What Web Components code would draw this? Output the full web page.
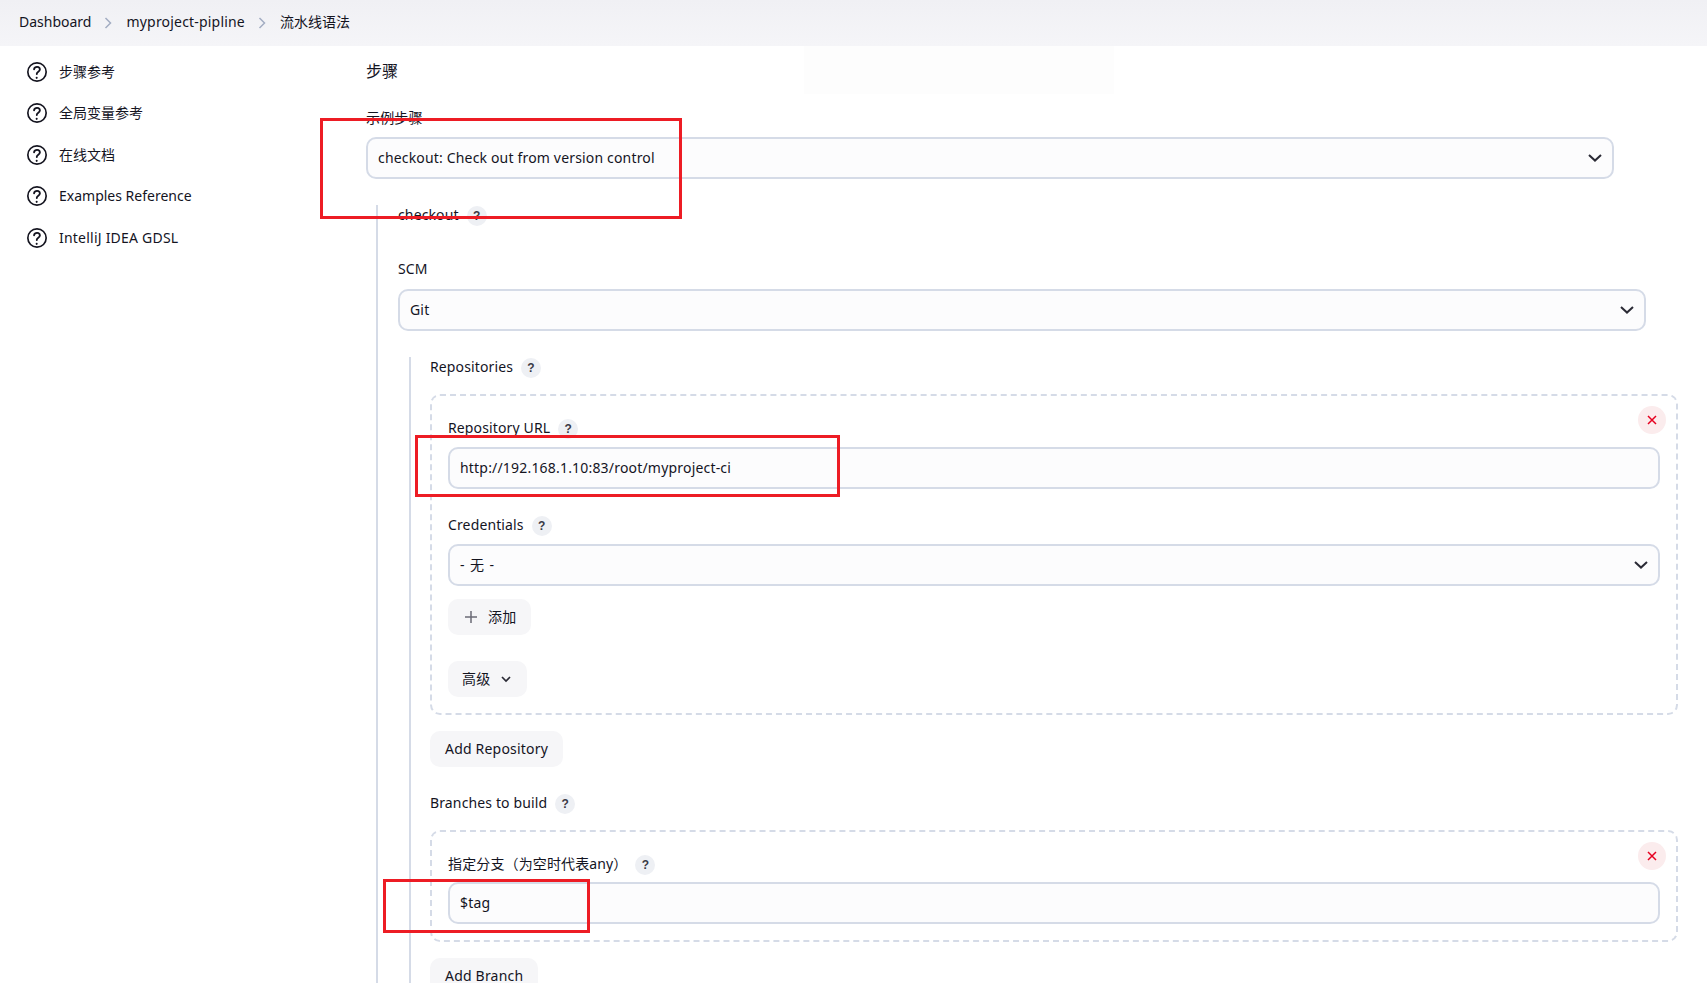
<!DOCTYPE html>
<html lang="zh">
<head>
<meta charset="utf-8">
<title>流水线语法</title>
<style>
    html, body {
        margin: 0;
        height: 100%;
        overflow: hidden;
        background: #fff;
    }
    body {
        position: relative;
        font: 14px/20px "Noto Sans", "Noto Sans CJK SC", sans-serif;
        color: #14141f;
    }
</style>
</head>
<body>
<jk-breadcrumbs>
    <jk-crumb>Dashboard</jk-crumb>
    <jk-crumb style="letter-spacing:.19px">myproject-pipline</jk-crumb>
    <jk-crumb last>流水线语法</jk-crumb>
</jk-breadcrumbs>
<jk-page>
    <jk-side-link slot="side">步骤参考</jk-side-link>
    <jk-side-link slot="side">全局变量参考</jk-side-link>
    <jk-side-link slot="side">在线文档</jk-side-link>
    <jk-side-link slot="side">Examples Reference</jk-side-link>
    <jk-side-link slot="side" style="letter-spacing:.22px">IntelliJ IDEA GDSL</jk-side-link>

    <jk-title>步骤</jk-title>
    <jk-label style="margin-top:27px;margin-bottom:9px">示例步骤</jk-label>
    <jk-select style="margin-right:64px">checkout: Check out from version control</jk-select>

    <jk-indent style="margin-top:26px;margin-left:10px;padding-left:20px">
        <jk-label help style="margin-bottom:0">checkout</jk-label>
        <jk-label style="margin-top:34px">SCM</jk-label>
        <jk-select style="margin-right:32px">Git</jk-select>

        <jk-indent style="margin-top:26px;margin-left:11px;padding-left:19px">
            <jk-label help style="margin-bottom:17px">Repositories</jk-label>
            <jk-chunk style="padding-top:22px">
                <jk-label help style="margin-bottom:9px">Repository URL</jk-label>
                <jk-text-field>http://192.168.1.10:83/root/myproject-ci</jk-text-field>
                <jk-label help style="margin-top:26px;margin-bottom:9px">Credentials</jk-label>
                <jk-select style="word-spacing:1.5px">- 无 -</jk-select>
                <jk-button icon="plus" style="margin-top:13px">添加</jk-button>
                <jk-button icon="chevron" style="margin-top:26px">高级</jk-button>
            </jk-chunk>
            <jk-button style="margin-top:16px">Add Repository</jk-button>
            <jk-label help style="margin-top:26px;margin-bottom:17px">Branches to build</jk-label>
            <jk-chunk style="padding-top:22px">
                <jk-label help style="margin-bottom:8px">指定分支（为空时代表any）</jk-label>
                <jk-text-field>$tag</jk-text-field>
            </jk-chunk>
            <jk-button style="margin-top:16px">Add Branch</jk-button>
        </jk-indent>
    </jk-indent>
</jk-page>
<jk-ghost-toast></jk-ghost-toast>
<jk-red-mark style="left:320px;top:118px;width:362px;height:101px"></jk-red-mark>
<jk-red-mark style="left:415px;top:435px;width:425px;height:62px"></jk-red-mark>
<jk-red-mark style="left:383px;top:879px;width:207px;height:54px"></jk-red-mark>

<script>
const CHEVRON_DOWN = `<svg viewBox="0 0 14 8" width="14" height="8" fill="none" stroke="currentColor" stroke-width="2"><path d="M1 1l6 5.6L13 1"/></svg>`;

const defineSimple = (name, html) => {
    customElements.define(name, class extends HTMLElement {
        constructor() {
            super();
            let shadowRoot = this.attachShadow({ mode: "open" });
            shadowRoot.innerHTML = html;
        }
    });
};

defineSimple("jk-breadcrumbs", `<style>
    :host {
        display: flex;
        align-items: center;
        box-sizing: border-box;
        height: 46px;
        padding: 0 0 2px 19px;
        background: linear-gradient(#f0f0f4, #f5f5f8);
    }
</style><slot></slot>`);

customElements.define("jk-crumb", class extends HTMLElement {
    constructor() {
        super();
        let shadowRoot = this.attachShadow({ mode: "open" });
        let separator = this.hasAttribute("last") ? "" : `<svg viewBox="0 0 8 12" width="8" height="12" fill="none" stroke="#a3adc2" stroke-width="1.5"><path d="M1.5 1l5 5-5 5"/></svg>`;
        shadowRoot.innerHTML = `<style>
        :host {
            display: flex;
            align-items: center;
        }
        svg {
            margin: 1px 14px 0 13px;
        }
        </style><slot></slot>${separator}`;
    }
});

defineSimple("jk-page", `<style>
    :host {
        display: grid;
        grid-template-columns: 366px 1fr;
    }
    aside {
        display: flex;
        flex-direction: column;
        padding-top: 5px;
    }
    main {
        display: flex;
        flex-direction: column;
        min-width: 0;
        padding: 15px 29px 0 0;
    }
</style><aside><slot name="side"></slot></aside><main><slot></slot></main>`);

defineSimple("jk-side-link", `<style>
    :host {
        display: flex;
        align-items: center;
        gap: 12px;
        height: 41.5px;
        padding-left: 27px;
    }
    svg {
        width: 20px;
        height: 20px;
        flex: none;
    }
</style><svg viewBox="64 64 384 384" fill="none" stroke="#14141f"><path d="M256 80a176 176 0 10176 176A176 176 0 00256 80z" stroke-width="32"/><path d="M200 202.29s.84-17.5 19.57-32.57C230.68 160.77 244 158.18 256 158c10.93-.14 20.69 1.67 26.53 4.45 10 4.76 29.47 16.38 29.47 41.09 0 26-17 37.81-36.37 50.8S252 281.43 252 296" stroke-linecap="round" stroke-width="36"/><path d="M250 348a20 20 0 1020 20 20 20 0 00-20-20z" fill="#14141f" stroke="none"/></svg><slot></slot>`);

defineSimple("jk-title", `<style>
    :host {
        display: block;
        font-size: 16px;
        height: 20px;
    }
</style><slot></slot>`);

customElements.define("jk-label", class extends HTMLElement {
    constructor() {
        super();
        let shadowRoot = this.attachShadow({ mode: "open" });
        let help = this.hasAttribute("help") ? `<jk-help></jk-help>` : "";
        shadowRoot.innerHTML = `<style>
        :host {
            display: flex;
            align-items: center;
            gap: 8px;
            height: 20px;
            margin-bottom: 10px;
            letter-spacing: .13px;
        }
        </style><span><slot></slot></span>${help}`;
    }
});

defineSimple("jk-help", `<style>
    :host {
        display: flex;
        align-items: center;
        justify-content: center;
        width: 20px;
        height: 20px;
        margin-top: 1px;
        border-radius: 50%;
        background: #eef0f4;
        color: #3a3a46;
        font: 700 12px/20px "Liberation Sans", sans-serif;
    }
</style>?`);

defineSimple("jk-select", `<style>
    :host {
        display: flex;
        align-items: center;
        justify-content: space-between;
        box-sizing: border-box;
        height: 42px;
        padding: 0 10px;
        border: 2px solid #d5dbe7;
        border-radius: 10px;
        background: #fcfcfd;
        letter-spacing: .17px;
    }
    svg {
        flex: none;
        color: #2a2a35;
    }
</style><slot></slot>${CHEVRON_DOWN}`);

defineSimple("jk-text-field", `<style>
    :host {
        display: flex;
        align-items: center;
        box-sizing: border-box;
        height: 42px;
        padding: 0 10px;
        border: 2px solid #d5dbe7;
        border-radius: 10px;
        background: #fcfcfd;
        letter-spacing: .19px;
    }
</style><slot></slot>`);

defineSimple("jk-indent", `<style>
    :host {
        display: flex;
        flex-direction: column;
        border-left: 2px solid #d5dbe7;
    }
</style><slot></slot>`);

defineSimple("jk-chunk", `<style>
    :host {
        display: flex;
        flex-direction: column;
        position: relative;
        padding: 24px 16px 16px 16px;
        border: 2px dashed #d5dbe7;
        border-radius: 10px;
    }
    button {
        position: absolute;
        top: 10px;
        right: 10px;
        display: flex;
        align-items: center;
        justify-content: center;
        width: 28px;
        height: 28px;
        padding: 0;
        border: 0;
        border-radius: 50%;
        background: #fbeced;
        color: #e6001f;
    }
</style><slot></slot><button><svg viewBox="0 0 10 10" width="10" height="10" fill="none" stroke="currentColor" stroke-width="1.5"><path d="M1 1l8 8M9 1l-8 8"/></svg></button>`);

customElements.define("jk-button", class extends HTMLElement {
    constructor() {
        super();
        let shadowRoot = this.attachShadow({ mode: "open" });
        let icon = this.getAttribute("icon");
        let plus = icon === "plus" ? `<svg viewBox="0 0 12 12" width="12" height="12" fill="none" stroke="#6b6b76" stroke-width="1.5"><path d="M6 0v12M0 6h12"/></svg>` : "";
        let chevron = icon === "chevron" ? `<svg viewBox="0 0 10 7" width="10" height="7" fill="none" stroke="#2a2a35" stroke-width="1.7"><path d="M1 1l4 4 4-4"/></svg>` : "";
        let padding = icon === "plus" ? "0 15px 0 17px" : icon === "chevron" ? "0 16px 0 14px" : "0 15px";
        shadowRoot.innerHTML = `<style>
        :host {
            display: flex;
            align-items: center;
            gap: 11px;
            align-self: flex-start;
            flex: none;
            height: 36px;
            padding: ${padding};
            border-radius: 10px;
            background: #f6f6f8;
            letter-spacing: .2px;
        }
        </style>${plus}<slot></slot>${chevron}`;
    }
});

defineSimple("jk-ghost-toast", `<style>
    :host {
        position: absolute;
        left: 804px;
        top: 46px;
        width: 310px;
        height: 48px;
        background: #fdfdfd;
    }
</style>`);

defineSimple("jk-red-mark", `<style>
    :host {
        position: absolute;
        box-sizing: border-box;
        border: 3px solid #ed1c24;
    }
</style>`);
</script>
</body>
</html>
